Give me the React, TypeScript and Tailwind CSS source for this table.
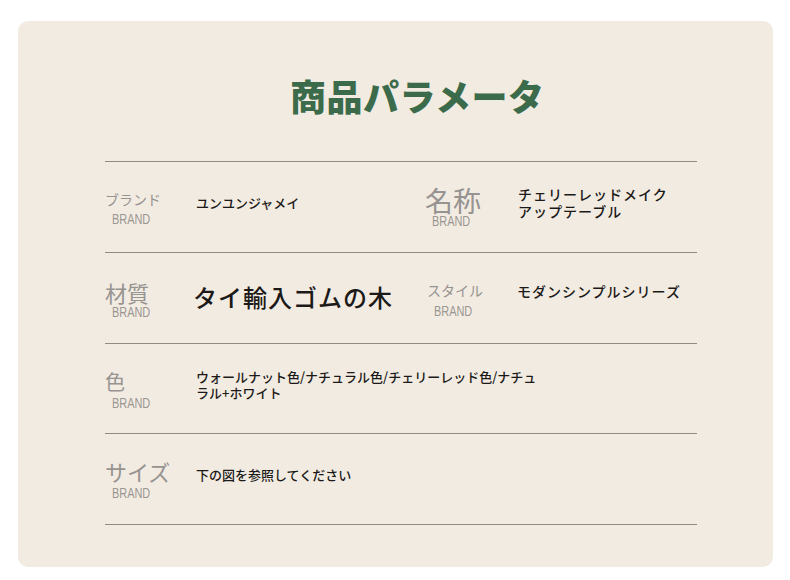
const jp = "font-['Noto_Sans_CJK_JP','Noto_Sans',sans-serif]";

function Label({ text, size, top, gap }: { text: string; size: string; top: string; gap: string }) {
  return (
    <div className={`flex flex-col items-start ${top}`}>
      <span className={`${size} leading-none text-[#969390]`}>{text}</span>
      <span
        className={`${gap} ml-[7px] inline-block origin-left scale-x-[0.78] font-['Liberation_Sans',sans-serif] text-[14px] leading-none text-[#9a9792]`}
      >
        BRAND
      </span>
    </div>
  );
}

export default function App() {
  return (
    <div className={`min-h-[580px] bg-white pt-[21px] ${jp}`}>
      <div className="mx-[18px] h-[546px] w-[755px] rounded-[10px] bg-[#f2ebe2]">
        <h1 className="pl-[272px] pt-[52px] text-[36px] font-black leading-[44px] tracking-[0.5px] text-[#3c6b4b]">
          商品パラメータ
        </h1>

        <div className="ml-[87px] mr-[76px] mt-[44px] border-t border-[#8f8b85]">
          <div className="flex h-[91px] border-b border-[#8f8b85]">
            <div className="flex w-[320px]">
              <div className="w-[91px]">
                <Label text="ブランド" size="text-[14px]" top="pt-[30px]" gap="mt-[6px]" />
              </div>
              <div className="pt-[32px] text-[13px] font-medium leading-[17px] text-[#1c1a18]">ユンユンジャメイ</div>
            </div>
            <div className="flex">
              <div className="w-[93px]">
                <Label text="名称" size="text-[28px]" top="pt-[24px]" gap="mt-[0px]" />
              </div>
              <div className="pt-[24px] text-[14px] font-medium leading-[17px] tracking-[1px] text-[#1c1a18]">
                チェリーレッドメイク
                <br />
                アップテーブル
              </div>
            </div>
          </div>

          <div className="flex h-[91px] border-b border-[#8f8b85]">
            <div className="flex w-[320px]">
              <div className="w-[88px]">
                <Label text="材質" size="text-[22px]" top="pt-[28px]" gap="mt-[2px]" />
              </div>
              <div className="pt-[30px] text-[24px] font-medium leading-[28px] tracking-[1px] text-[#1c1a18]">
                タイ輸入ゴムの木
              </div>
            </div>
            <div className="flex">
              <div className="w-[92px] pl-[2px]">
                <Label text="スタイル" size="text-[14px]" top="pt-[30px]" gap="mt-[7px]" />
              </div>
              <div className="pt-[30px] text-[14px] font-medium leading-[17px] tracking-[1px] text-[#1c1a18]">
                モダンシンプルシリーズ
              </div>
            </div>
          </div>

          <div className="flex h-[90px] border-b border-[#8f8b85]">
            <div className="w-[91px]">
              <Label text="色" size="text-[20px]" top="pt-[28px]" gap="mt-[4px]" />
            </div>
            <div className="w-[345px] pt-[25px] text-[13px] font-medium leading-[16px] text-[#1c1a18]">
              ウォールナット色/ナチュラル色/チェリーレッド色/ナチュ
              <br />
              ラル+ホワイト
            </div>
          </div>

          <div className="flex h-[91px] border-b border-[#8f8b85]">
            <div className="w-[91px]">
              <Label text="サイズ" size="text-[22px]" top="pt-[26px]" gap="mt-[4px]" />
            </div>
            <div className="pt-[32px] text-[13px] font-medium leading-[17px] text-[#1c1a18]">下の図を参照してください</div>
          </div>
        </div>
      </div>
    </div>
  );
}
